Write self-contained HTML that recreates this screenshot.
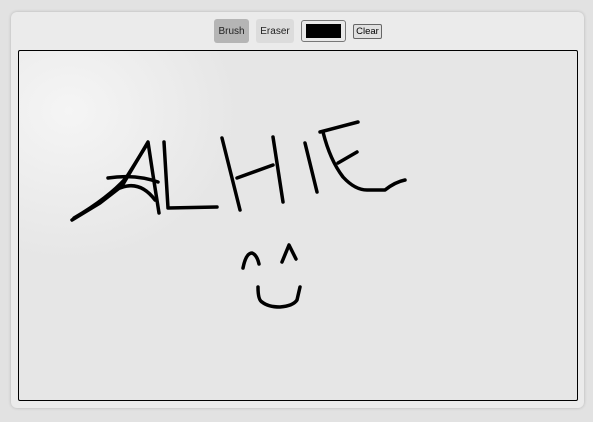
<!DOCTYPE html><html><head><style>
body{margin:0;width:593px;height:422px;background:#e2e2e2;font-family:"Liberation Sans",sans-serif;position:relative;overflow:hidden}
.panel{position:absolute;left:11px;top:12px;width:573px;height:396px;background:#ebebeb;border-radius:6px;box-shadow:0 0 3px rgba(0,0,0,.2)}
.btn{position:absolute;top:19px;height:24px;font-size:10px;line-height:25px;text-align:center;border-radius:3px;color:#222}
.cv{position:absolute;left:18px;top:50px;width:558px;height:349px;border:1px solid #000;border-radius:2px;background:radial-gradient(ellipse 170px 150px at 50px 60px,#f5f5f5,#e6e6e6 100%),#e6e6e6;overflow:hidden}
</style></head><body>
<div class="panel"></div>
<div class="btn" style="left:214px;width:35px;background:#b5b5b5">Brush</div>
<div class="btn" style="left:256px;width:38px;background:#dcdcdc">Eraser</div>
<div style="position:absolute;left:301px;top:20px;width:43px;height:20px;border:1px solid #777;border-radius:3px;background:#e8e8e8"><div style="position:absolute;left:4px;top:3px;width:35px;height:14px;background:#000"></div></div>
<div style="position:absolute;left:353px;top:24px;width:27px;height:13px;border:1px solid #666;border-radius:2px;background:#e0e0e0;font-size:9.5px;line-height:13px;text-align:center">Clear</div>
<div class="cv"></div>
<svg width="593" height="422" style="position:absolute;left:0;top:0" fill="none" stroke="#000" stroke-width="3.5" stroke-linecap="round" stroke-linejoin="round">
<path d="M72 220 L100 203 L122 186 L148 142 L153 175 L159 213"/>
<path d="M74 218 Q108 198 126 178 L146 146"/>
<path d="M108 178 Q135 174 158 182"/>
<path d="M120 188 Q140 180 155 200"/>
<path d="M164 142 L168 208 L217 207"/>
<path d="M222 138 L240 210"/>
<path d="M237 178 L273 165"/>
<path d="M273 137 L283 202"/>
<path d="M305 143 L317 192"/>
<path d="M320 132 L358 122"/>
<path d="M323 132 Q330 160 343 177 Q355 190 367 190 L385 190 Q395 182 405 180"/>
<path d="M338 163 L357 152"/>
<path d="M243 268 Q246 253 252 253 Q257 255 259 264"/>
<path d="M282 262 L289 245 L296 259"/>
<path d="M258 287 Q258 300 262 302 Q268 307 280 307 Q293 306 297 300 L300 287"/>
</svg>
</body></html>
